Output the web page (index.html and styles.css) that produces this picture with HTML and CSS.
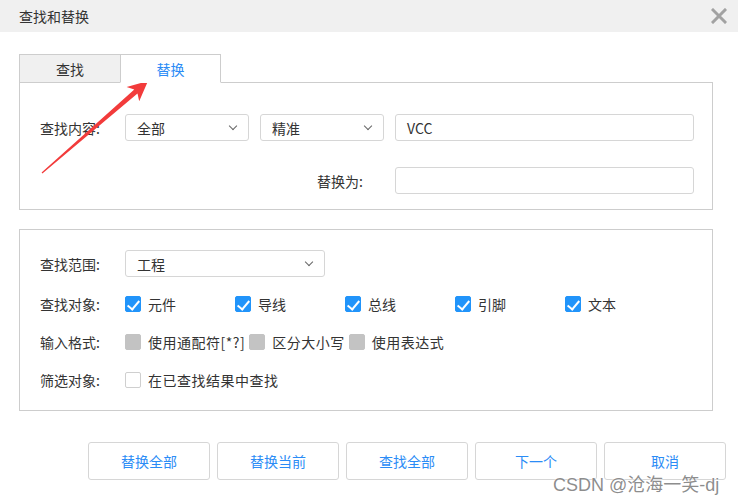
FILE: index.html
```html
<!DOCTYPE html>
<html lang="zh-CN">
<head>
    <meta charset="UTF-8">
    <title>查找和替换</title>
    <link rel="stylesheet" href="styles.css">
</head>
<body>
    <div class="dialog">
        <div class="titlebar">
            <span class="title">查找和替换</span>
            <svg class="close" width="16" height="16" viewBox="0 0 16 16">
                <path d="M2 2 L14 14 M14 2 L2 14" stroke="#a2a2a2" stroke-width="3" stroke-linecap="square"/>
            </svg>
        </div>

        <div class="content">
            <div class="tabs">
                <div class="tab">查找</div>
                <div class="tab tab-active">替换</div>
            </div>

            <div class="panel panel-find">
                <div class="row">
                    <span class="label">查找内容:</span>
                    <div class="select select-sm"><span>全部</span><i class="chev"></i></div>
                    <div class="select select-sm"><span>精准</span><i class="chev"></i></div>
                    <div class="input">VCC</div>
                </div>
                <div class="row row-end">
                    <span class="label label-right">替换为:</span>
                    <div class="input"></div>
                </div>
            </div>

            <div class="panel panel-opts">
                <div class="row row-first">
                    <span class="label">查找范围:</span>
                    <div class="select select-lg"><span>工程</span><i class="chev"></i></div>
                </div>
                <div class="row row-opt">
                    <span class="label">查找对象:</span>
                    <label class="check"><i class="box box-on"></i>元件</label>
                    <label class="check"><i class="box box-on"></i>导线</label>
                    <label class="check"><i class="box box-on"></i>总线</label>
                    <label class="check"><i class="box box-on"></i>引脚</label>
                    <label class="check"><i class="box box-on"></i>文本</label>
                </div>
                <div class="row row-opt">
                    <span class="label">输入格式:</span>
                    <label class="check check-tight"><i class="box box-off"></i>使用通配符[*?]</label>
                    <label class="check check-tight"><i class="box box-off"></i>区分大小写</label>
                    <label class="check check-tight"><i class="box box-off"></i>使用表达式</label>
                </div>
                <div class="row row-opt">
                    <span class="label">筛选对象:</span>
                    <label class="check check-tight"><i class="box"></i>在已查找结果中查找</label>
                </div>
            </div>

            <div class="actions">
                <button class="btn">替换全部</button>
                <button class="btn">替换当前</button>
                <button class="btn">查找全部</button>
                <button class="btn">下一个</button>
                <button class="btn">取消</button>
            </div>
        </div>

        <!-- annotation overlay -->
        <svg class="arrow" width="738" height="501" viewBox="0 0 738 501">
            <polygon fill="#f23b3b" points="41.6,172.6 134.3,89.6 126.6,87.0 148,81 139.2,101.2 137.5,93.4 42.4,173.6"/>
        </svg>
        <div class="watermark">CSDN @沧海一笑-dj</div>
    </div>
</body>
</html>
```

FILE: styles.css
```css
* {
    margin: 0;
    padding: 0;
    box-sizing: border-box;
}

body {
    font-family: "Noto Sans CJK SC", "Noto Sans", sans-serif;
    font-size: 14px;
    color: #333;
    background-color: #fff;
}

.dialog {
    position: relative;
    width: 738px;
    height: 501px;
    overflow: hidden;
}

.titlebar {
    height: 32px;
    background-color: #f0f0f0;
    display: flex;
    align-items: center;
    justify-content: space-between;
    padding: 0 11px 0 19px;
}

.title {
    font-size: 14px;
    color: #333;
}

.content {
    padding: 22px 25px 0 19px;
}

.tabs {
    display: flex;
    height: 29px;
    position: relative;
    z-index: 1;
}

.tab {
    width: 102px;
    height: 29px;
    display: flex;
    align-items: center;
    justify-content: center;
    background-color: #f0f0f0;
    border: 1px solid #cdcdcd;
    color: #333;
}

.tab-active {
    width: 101px;
    margin-left: -1px;
    background-color: #fff;
    border-bottom-color: #fff;
    color: #2b8cf6;
}

.panel {
    border: 1px solid #cdcdcd;
}

.panel-find {
    margin-top: -1px;
    height: 128px;
    padding: 31px 18px 0 20px;
}

.panel-opts {
    margin-top: 19px;
    height: 182px;
    padding: 20px 18px 0 20px;
}

.row {
    display: flex;
    align-items: center;
}

.panel-find .row {
    height: 27px;
}

.panel-find .row-end {
    margin-top: 26px;
    justify-content: flex-end;
}

.label {
    width: 85px;
    flex-shrink: 0;
    color: #333;
}

.label-right {
    width: auto;
    margin-right: 32px;
}

.select {
    height: 27px;
    border: 1px solid #d6d6d6;
    border-radius: 3px;
    display: flex;
    align-items: center;
    justify-content: space-between;
    padding: 0 12px 0 11px;
    margin-right: 11px;
    color: #333;
}

.select-sm {
    width: 124px;
}

.select-lg {
    width: 200px;
}

.chev {
    width: 6px;
    height: 6px;
    border-right: 1.5px solid #666;
    border-bottom: 1.5px solid #666;
    transform: rotate(45deg);
    margin-top: -4px;
}

.input {
    width: 299px;
    height: 27px;
    border: 1px solid #d6d6d6;
    border-radius: 3px;
    padding: 0 11px;
    display: flex;
    align-items: center;
    color: #333;
}

.row-first {
    height: 27px;
    margin-bottom: 8px;
}

.row-opt {
    height: 38px;
}

.check {
    display: flex;
    align-items: center;
    width: 110px;
    flex-shrink: 0;
}

.check-tight {
    width: auto;
    margin-right: 4px;
    letter-spacing: 0.5px;
}

.box {
    width: 16px;
    height: 16px;
    border: 1px solid #cfcfcf;
    border-radius: 2px;
    margin-right: 7px;
    position: relative;
    flex-shrink: 0;
}

.box-off {
    background-color: #c3c3c3;
    border-color: #c3c3c3;
}

.box-on {
    background-color: #2194fa;
    border-color: #2194fa;
}

.box-on::after {
    content: "";
    position: absolute;
    left: 4px;
    top: 1px;
    width: 5px;
    height: 10px;
    border-right: 2.5px solid #fff;
    border-bottom: 2.5px solid #fff;
    transform: rotate(40deg);
}

.actions {
    display: flex;
    justify-content: flex-end;
    gap: 7px;
    margin-top: 31px;
    margin-right: -13px;
}

.btn {
    width: 122px;
    height: 38px;
    border: 1px solid #d6d6d6;
    border-radius: 3px;
    background-color: #fff;
    color: #2b8cf6;
    font-family: "Noto Sans CJK SC", "Noto Sans", sans-serif;
    font-size: 14px;
}

.arrow {
    position: absolute;
    left: 0;
    top: 0;
    pointer-events: none;
}

.watermark {
    position: absolute;
    left: 553px;
    top: 470px;
    font-family: "Liberation Sans", "Noto Sans CJK SC", sans-serif;
    font-size: 18px;
    color: rgba(120, 120, 120, 0.85);
    text-shadow: 0 0 2px #fff, 0 0 1px #fff;
    white-space: nowrap;
}
```
